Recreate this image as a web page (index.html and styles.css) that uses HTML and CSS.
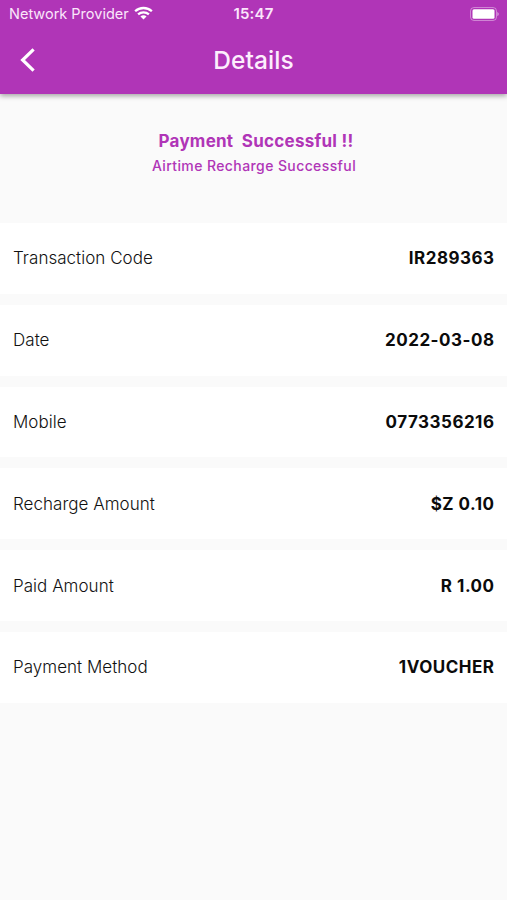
FILE: index.html
```html
<!DOCTYPE html>
<html lang="en">
<head>
<meta charset="utf-8">
<title>Details</title>
<link rel="stylesheet" href="styles.css">
</head>
<body>
<header class="top">
  <div class="status">
    <div class="carrier"><span class="provider">Network Provider</span>
      <svg class="wifi" width="19" height="14" viewBox="0 0 20 14"><g fill="none" stroke="#fff" stroke-width="2.4"><path d="M1.2 5.2C6 .6 14 .6 18.8 5.2"/><path d="M4.3 8.5c3.3-3 8.1-3 11.4 0"/></g><path fill="#fff" d="M6.8 10.7c1.8-1.6 4.6-1.6 6.4 0L10 13.8z"/></svg>
    </div>
    <span class="clock">15:47</span>
    <svg class="battery" width="30" height="14" viewBox="0 0 30 14"><rect x=".5" y=".5" width="26" height="13" rx="3.5" fill="none" stroke="#fff" stroke-opacity=".4"/><rect x="2.5" y="2.3" width="22" height="9.4" rx="1.5" fill="#fff"/><path d="M27.3 4.7q3 2.3 0 4.6z" fill="#fff" fill-opacity=".5"/></svg>
  </div>
  <div class="nav">
    <svg class="back" width="16" height="26" viewBox="0 0 16 26"><path d="M13.6 2.3 2.6 13l11 10.7" fill="none" stroke="#fff" stroke-width="3.2"/></svg>
    <h1 class="title">Details</h1>
  </div>
</header>
<section class="message">
  <h2 class="headline">Payment&nbsp; Successful !!</h2>
  <p class="subline">Airtime Recharge Successful</p>
</section>
<main class="rows">
  <div class="row"><span class="label">Transaction Code</span><span class="value">IR289363</span></div>
  <div class="row"><span class="label">Date</span><span class="value">2022-03-08</span></div>
  <div class="row"><span class="label">Mobile</span><span class="value">0773356216</span></div>
  <div class="row"><span class="label">Recharge Amount</span><span class="value">$Z 0.10</span></div>
  <div class="row"><span class="label">Paid Amount</span><span class="value">R 1.00</span></div>
  <div class="row"><span class="label">Payment Method</span><span class="value">1VOUCHER</span></div>
</main>
</body>
</html>
```
FILE: styles.css
```css
* { box-sizing: border-box; }
body { margin: 0; height: 900px; background: #fafafa; font-family: Inter, "Liberation Sans", sans-serif; color: #111; overflow: hidden; }
.top { height: 94px; background: #b035b7; color: #fff; box-shadow: 0 2px 5px rgba(0,0,0,.35); }
.status { height: 27px; padding: 0 7px 0 9px; display: grid; grid-template-columns: 1fr auto 1fr; align-items: center; font-size: 14.5px; line-height: 27px; }
.carrier { display: flex; align-items: center; gap: 5px; }
.provider { white-space: nowrap; color: #fbe6fb; }
.wifi { flex: none; margin-top: -1px; }
.clock { font-size: 15px; font-weight: 600; color: #fbe6fb; margin-left: -2px; letter-spacing: .15px; }
.battery { justify-self: end; }
.nav { height: 65px; display: grid; grid-template-columns: 60px 1fr 60px; align-items: center; }
.back { margin-left: 20px; }
.title { margin: 0; padding-top: 1px; text-align: center; font-size: 24.5px; font-weight: 500; line-height: 30px; letter-spacing: .1px; color: #fdeefd; }
.message { height: 129px; padding-top: 36px; text-align: center; color: #b035b7; }
.headline { margin: 0 0 0 5px; font-size: 17px; font-weight: 700; line-height: 22px; letter-spacing: .25px; }
.subline { margin: 4px 0 0 1px; font-size: 14px; font-weight: 500; line-height: 20px; letter-spacing: .4px; }
.rows { display: grid; gap: 11px; }
.row { height: 70.8px; padding: 0 12.5px 0 13px; display: flex; justify-content: space-between; align-items: center; background: #fff; font-size: 17px; }
.label { font-weight: 300; letter-spacing: .03px; }
.value { font-weight: 700; letter-spacing: .5px; color: #0b0b0b; }
```
